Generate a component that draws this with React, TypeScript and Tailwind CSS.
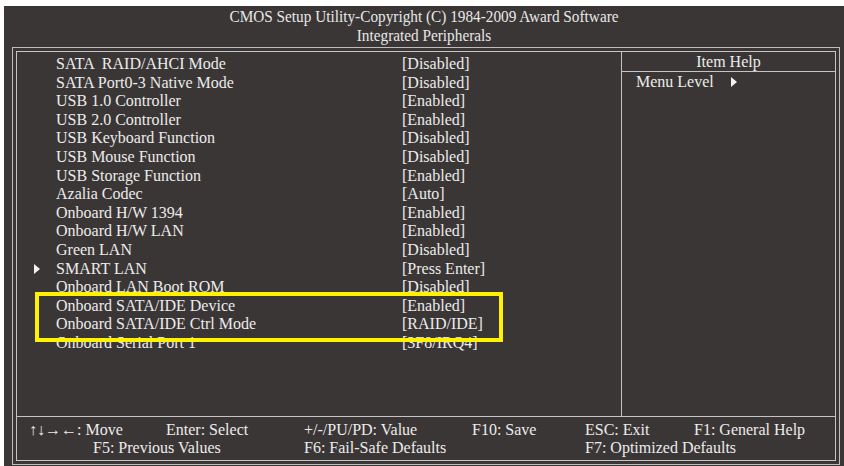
import React from 'react';

interface Row {
    label: string;
    value: string;
    sub?: boolean;
}

const rows: Row[] = [
    { label: 'SATA  RAID/AHCI Mode', value: '[Disabled]' },
    { label: 'SATA Port0-3 Native Mode', value: '[Disabled]' },
    { label: 'USB 1.0 Controller', value: '[Enabled]' },
    { label: 'USB 2.0 Controller', value: '[Enabled]' },
    { label: 'USB Keyboard Function', value: '[Disabled]' },
    { label: 'USB Mouse Function', value: '[Disabled]' },
    { label: 'USB Storage Function', value: '[Enabled]' },
    { label: 'Azalia Codec', value: '[Auto]' },
    { label: 'Onboard H/W 1394', value: '[Enabled]' },
    { label: 'Onboard H/W LAN', value: '[Enabled]' },
    { label: 'Green LAN', value: '[Disabled]' },
    { label: 'SMART LAN', value: '[Press Enter]', sub: true },
    { label: 'Onboard LAN Boot ROM', value: '[Disabled]' },
    { label: 'Onboard SATA/IDE Device', value: '[Enabled]' },
    { label: 'Onboard SATA/IDE Ctrl Mode', value: '[RAID/IDE]' },
    { label: 'Onboard Serial Port 1', value: '[3F8/IRQ4]' },
];

const Arrow = () => (
    <svg width="6" height="10" viewBox="0 0 6 10" className="block">
        <polygon points="0,0 6,5 0,10" fill="#f2f2f2" />
    </svg>
);

const App = () => {
    return (
        <div
            className="w-[844px] h-[466px] bg-white pl-[4px] pt-[6px] flex overflow-hidden"
            style={{ fontFamily: '"Liberation Serif", "Times New Roman", serif' }}
        >
            <div className="relative flex-1 flex flex-col bg-[#3a3635] text-[#ececec] text-[16px]">
                {/* header */}
                <div className="h-[41px] pt-[1px] flex flex-col items-center leading-[19px] text-[#e8e8e8] scale-x-[0.955]">
                    <div>CMOS Setup Utility-Copyright (C) 1984-2009 Award Software</div>
                    <div>Integrated Peripherals</div>
                </div>

                {/* double frame */}
                <div className="ml-[8px] w-[828px] h-[418px] border border-[#bdbdbd] p-[3px]">
                    <div className="h-full border border-[#c4c4c4] flex flex-col">
                        <div className="h-[364px] flex">
                            <div className="w-[604px] pt-[3px] leading-[18.6px]">
                                {rows.map((row) => (
                                    <div key={row.label} className="flex h-[18.6px] items-center">
                                        <div className="w-[39px] flex justify-end">
                                            {row.sub && (
                                                <div className="mr-[16px]">
                                                    <Arrow />
                                                </div>
                                            )}
                                        </div>
                                        <div className="w-[346px] whitespace-pre">{row.label}</div>
                                        <div>{row.value}</div>
                                    </div>
                                ))}
                            </div>
                            <div className="flex-1 border-l border-[#c4c4c4] flex flex-col">
                                <div className="h-[20px] leading-[20px] text-center border-b border-[#c4c4c4]">
                                    Item Help
                                </div>
                                <div className="flex items-center pl-[14px] mt-[1px] h-[18px]">
                                    <span>Menu Level</span>
                                    <div className="ml-[17px]">
                                        <Arrow />
                                    </div>
                                </div>
                            </div>
                        </div>

                        {/* footer */}
                        <div className="flex-1 border-t border-[#c4c4c4] pt-[4px] leading-[18px]">
                            <div className="flex pl-[12px]">
                                <div className="w-[137px]">↑↓→←: Move</div>
                                <div className="w-[138px]">Enter: Select</div>
                                <div className="w-[168px]">+/-/PU/PD: Value</div>
                                <div className="w-[113px]">F10: Save</div>
                                <div className="w-[109px]">ESC: Exit</div>
                                <div>F1: General Help</div>
                            </div>
                            <div className="flex pl-[76px]">
                                <div className="w-[211px]">F5: Previous Values</div>
                                <div className="w-[281px]">F6: Fail-Safe Defaults</div>
                                <div>F7: Optimized Defaults</div>
                            </div>
                        </div>
                    </div>
                </div>

                {/* highlight annotation */}
                <div className="absolute left-[31px] top-[286px] w-[468px] h-[50px] border-[4px] border-[#fff200]" />
            </div>
        </div>
    );
};

export default App;
